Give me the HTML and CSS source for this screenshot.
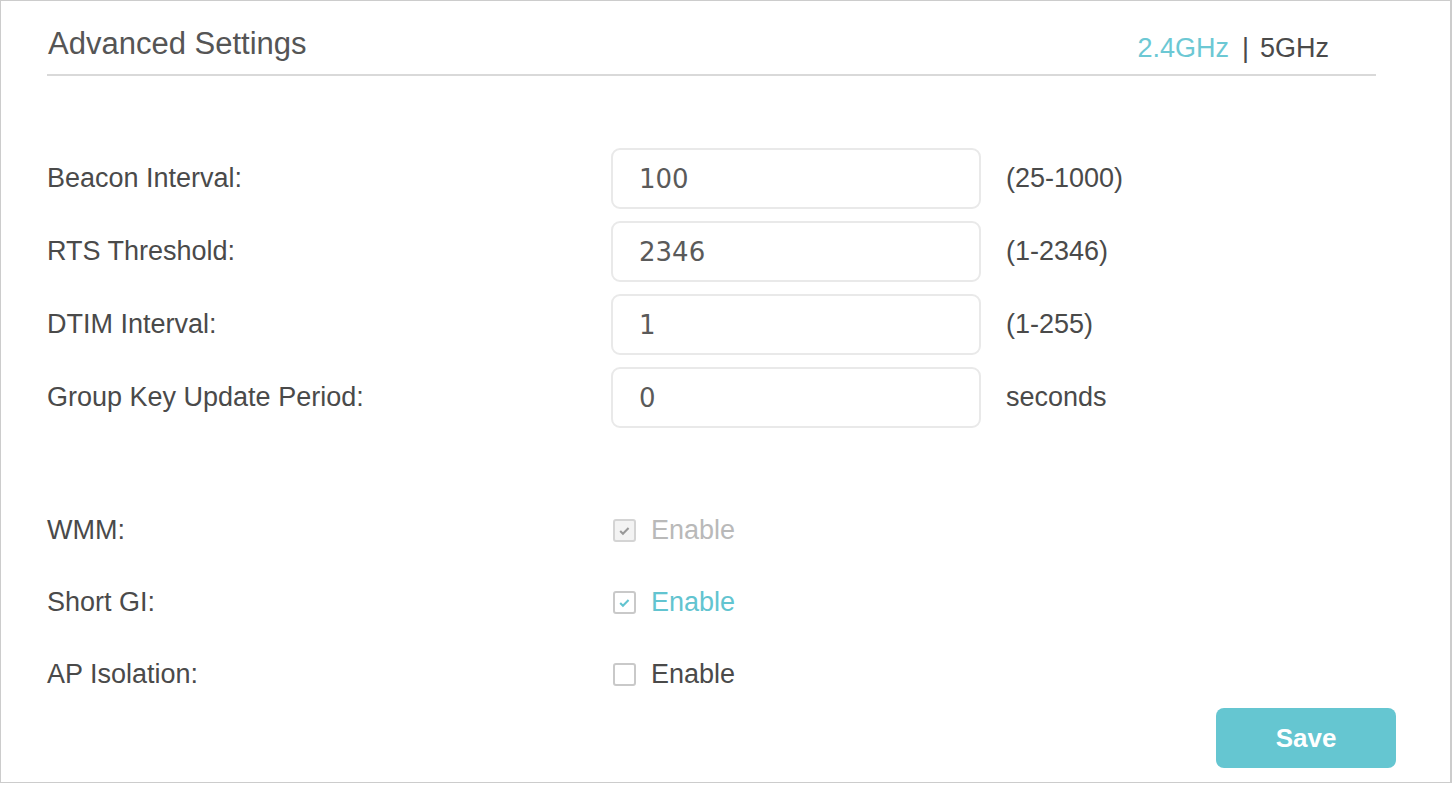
FILE: index.html
```
<!DOCTYPE html>
<html lang="en">
<head>
    <meta charset="UTF-8">
    <meta name="viewport" content="width=device-width, initial-scale=1.0">
    <title>Advanced Settings</title>
    <link rel="stylesheet" href="styles.css">
</head>
<body>
<div class="panel">
    <div class="panel-head">
        <h2 class="title">Advanced Settings</h2>
        <div class="bands">
            <span class="band active">2.4GHz</span>
            <span class="sep">|</span>
            <span class="band">5GHz</span>
        </div>
    </div>

    <div class="fields">
        <div class="field">
            <label class="label">Beacon Interval:</label>
            <input class="text-input" type="text" value="100">
            <span class="hint">(25-1000)</span>
        </div>
        <div class="field">
            <label class="label">RTS Threshold:</label>
            <input class="text-input" type="text" value="2346">
            <span class="hint">(1-2346)</span>
        </div>
        <div class="field">
            <label class="label">DTIM Interval:</label>
            <input class="text-input" type="text" value="1">
            <span class="hint">(1-255)</span>
        </div>
        <div class="field">
            <label class="label">Group Key Update Period:</label>
            <input class="text-input" type="text" value="0">
            <span class="hint">seconds</span>
        </div>
    </div>

    <div class="checks">
        <div class="check-row">
            <span class="label">WMM:</span>
            <span class="check disabled">
                <span class="box">
                    <svg viewBox="0 0 22 22" width="22" height="22"><path d="M6 11.5l3.2 3.2 6.5-6.5" fill="none" stroke="#999" stroke-width="2.4"/></svg>
                </span>
                Enable
            </span>
        </div>
        <div class="check-row">
            <span class="label">Short GI:</span>
            <span class="check checked">
                <span class="box">
                    <svg viewBox="0 0 22 22" width="22" height="22"><path d="M6 11.5l3.2 3.2 6.5-6.5" fill="none" stroke="#62c4d0" stroke-width="2.4"/></svg>
                </span>
                Enable
            </span>
        </div>
        <div class="check-row">
            <span class="label">AP Isolation:</span>
            <span class="check">
                <span class="box"></span>
                Enable
            </span>
        </div>
    </div>

    <div class="actions">
        <button class="btn-save">Save</button>
    </div>
</div>
</body>
</html>
```

FILE: styles.css
```
body {
    margin: 0;
    background: #fff;
    font-family: "Liberation Sans", Arial, sans-serif;
    color: #4a4a4a;
}

.panel {
    box-sizing: border-box;
    width: 1452px;
    height: 783px;
    border: 1px solid #cccccc;
    border-right-width: 2px;
    padding: 0 74px 0 46px;
}

.panel-head {
    display: flex;
    justify-content: space-between;
    align-items: flex-start;
    padding: 25px 47px 8px 1px;
    border-bottom: 2px solid #d9d9d9;
}

.title {
    margin: 0;
    font-size: 31px;
    font-weight: normal;
    line-height: 36px;
    color: #555;
}

.bands {
    display: flex;
    padding-top: 4px;
    font-size: 27px;
    line-height: 36px;
    color: #4a4a4a;
}

.band.active {
    color: #6cc8d4;
}

.sep {
    margin: 0 11px 0 13px;
}

.fields {
    display: flex;
    flex-direction: column;
    gap: 12px;
    margin-top: 72px;
}

.field,
.check-row {
    display: grid;
    grid-template-columns: 539px 370px auto;
    column-gap: 25px;
    align-items: center;
}

.field {
    height: 61px;
}

.label {
    font-size: 27px;
}

.text-input {
    box-sizing: border-box;
    width: 370px;
    height: 61px;
    border: 2px solid #e9e9e9;
    border-radius: 9px;
    padding: 0 0 0 26px;
    font-family: "DejaVu Sans", Verdana, sans-serif;
    font-size: 26px;
    color: #5a5a5a;
    outline: none;
}

.hint {
    font-size: 27px;
}

.checks {
    display: flex;
    flex-direction: column;
    gap: 28px;
    margin-top: 80px;
}

.check-row {
    height: 44px;
}

.check {
    display: flex;
    align-items: center;
    gap: 15px;
    margin-left: 2px;
    font-size: 27px;
    color: #4a4a4a;
}

.box {
    box-sizing: border-box;
    width: 23px;
    height: 23px;
    border: 2px solid #c9c9c9;
    border-radius: 3px;
    background: #fff;
    display: flex;
    align-items: center;
    justify-content: center;
}

.box svg {
    width: 19px;
    height: 19px;
}

.check.disabled {
    color: #b9b9b9;
}

.check.disabled .box {
    background: #f3f3f3;
    border-color: #d4d4d4;
}

.check.checked {
    color: #62c4d0;
}

.actions {
    display: flex;
    justify-content: flex-end;
    margin: 12px -20px 0 0;
}

.btn-save {
    width: 180px;
    height: 60px;
    border: none;
    border-radius: 8px;
    background: #65c6d1;
    color: #fff;
    font-family: "Liberation Sans", Arial, sans-serif;
    font-size: 26px;
    font-weight: bold;
}
```
